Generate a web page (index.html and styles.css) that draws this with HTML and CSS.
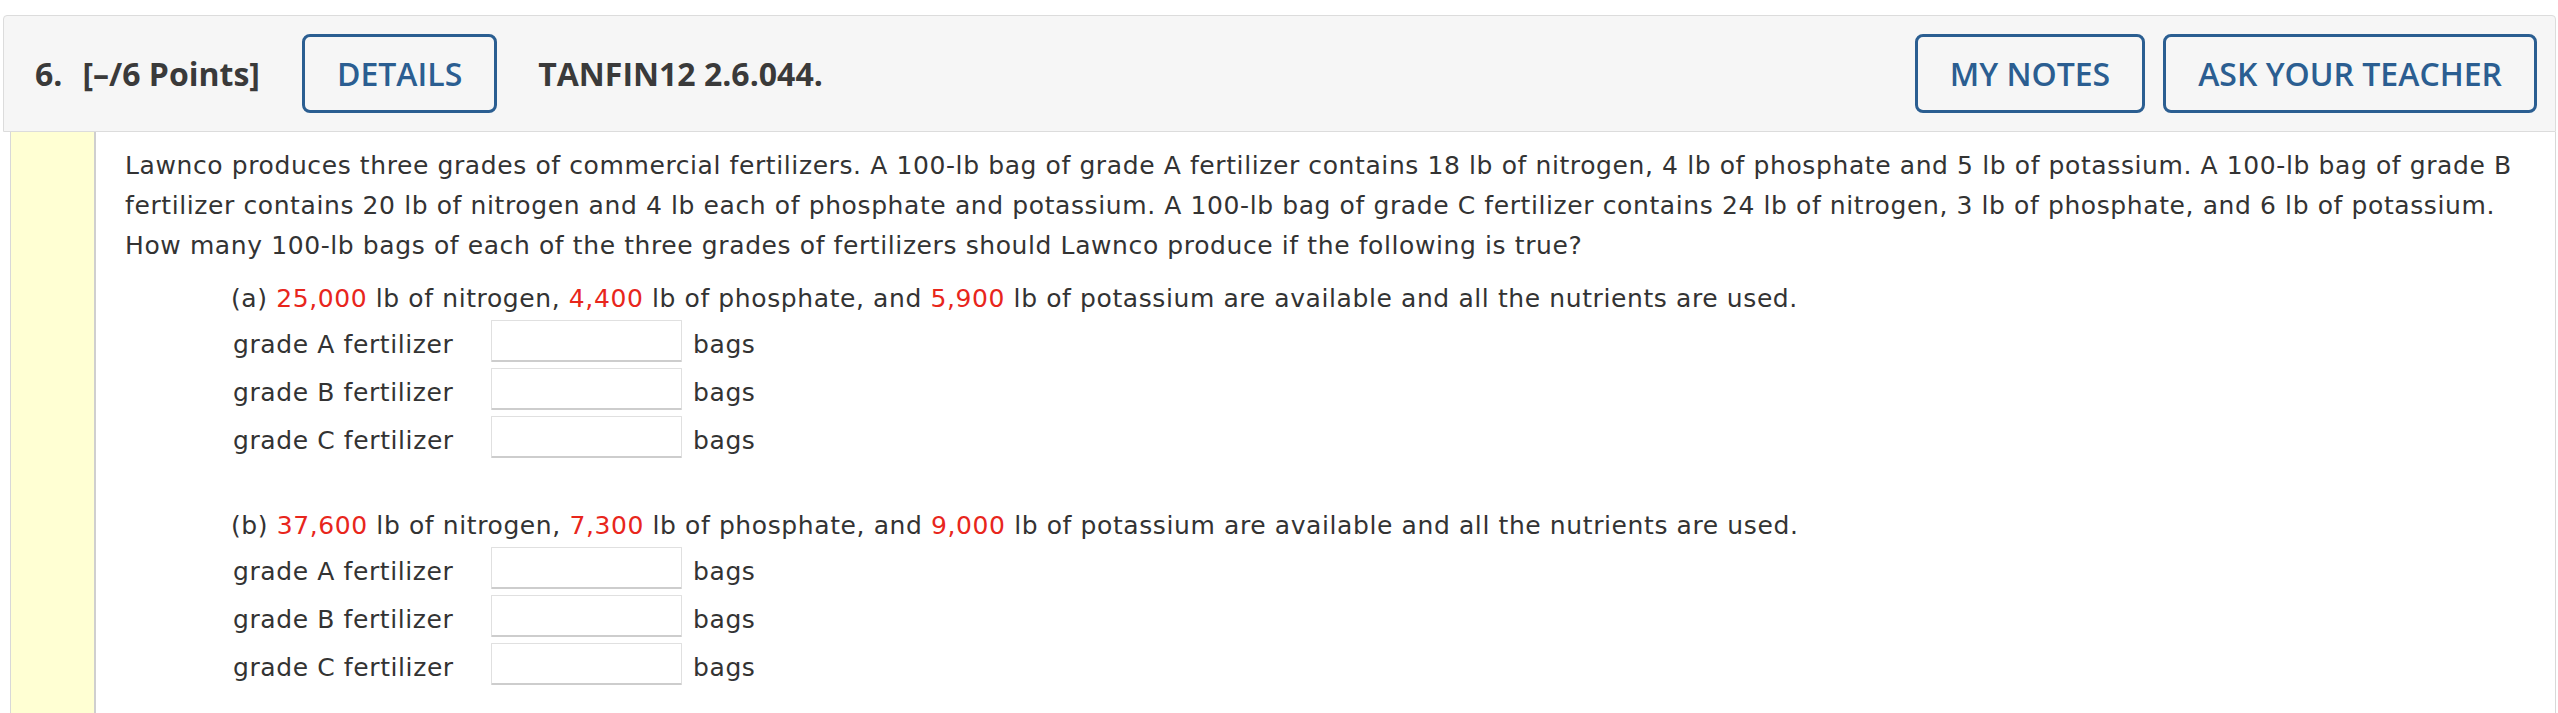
FILE: index.html
```html
<!DOCTYPE html>
<html lang="en">
<head>
<meta charset="utf-8">
<title>Question 6</title>
<link rel="stylesheet" href="styles.css">
</head>
<body>
<div class="question">
  <div class="header">
    <span class="qnum">6.</span>
    <span class="points">[–/6 Points]</span>
    <button class="btn btn-details">DETAILS</button>
    <span class="qid">TANFIN12 2.6.044.</span>
    <span class="spacer"></span>
    <button class="btn">MY NOTES</button>
    <button class="btn btn-ask">ASK YOUR TEACHER</button>
  </div>
  <div class="content">
    <div class="strip"></div>
    <div class="body">
      <p class="stem">Lawnco produces three grades of commercial fertilizers. A 100-lb bag of grade A fertilizer contains 18 lb of nitrogen, 4 lb of phosphate and 5 lb of potassium. A 100-lb bag of grade B fertilizer contains 20 lb of nitrogen and 4 lb each of phosphate and potassium. A 100-lb bag of grade C fertilizer contains 24 lb of nitrogen, 3 lb of phosphate, and 6 lb of potassium. How many 100-lb bags of each of the three grades of fertilizers should Lawnco produce if the following is true?</p>
      <div class="part">
        <p class="part-text">(a) <span class="red">25,000</span> lb of nitrogen, <span class="red">4,400</span> lb of phosphate, and <span class="red">5,900</span> lb of potassium are available and all the nutrients are used.</p>
        <div class="rows">
          <div class="row"><span class="label">grade A fertilizer</span><input class="answer" type="text"><span class="unit">bags</span></div>
          <div class="row"><span class="label">grade B fertilizer</span><input class="answer" type="text"><span class="unit">bags</span></div>
          <div class="row"><span class="label">grade C fertilizer</span><input class="answer" type="text"><span class="unit">bags</span></div>
        </div>
      </div>
      <div class="part part-b">
        <p class="part-text">(b) <span class="red">37,600</span> lb of nitrogen, <span class="red">7,300</span> lb of phosphate, and <span class="red">9,000</span> lb of potassium are available and all the nutrients are used.</p>
        <div class="rows">
          <div class="row"><span class="label">grade A fertilizer</span><input class="answer" type="text"><span class="unit">bags</span></div>
          <div class="row"><span class="label">grade B fertilizer</span><input class="answer" type="text"><span class="unit">bags</span></div>
          <div class="row"><span class="label">grade C fertilizer</span><input class="answer" type="text"><span class="unit">bags</span></div>
        </div>
      </div>
    </div>
  </div>
</div>
</body>
</html>
```

FILE: styles.css
```css
html, body {
  margin: 0;
  padding: 0;
  background: #ffffff;
}

.question {
  margin: 15px 2px 0 3px;
}

.header {
  box-sizing: border-box;
  height: 117px;
  display: flex;
  align-items: center;
  padding: 0 18px 0 31px;
  background: #f6f6f6;
  border: 1px solid #dcdcdc;
  border-radius: 4px 4px 0 0;
  font-family: "Open Sans", "Liberation Sans", sans-serif;
  color: #3a3a3a;
}

.qnum,
.points,
.qid {
  font-size: 32px;
  font-weight: 700;
  white-space: nowrap;
}

.points {
  margin-left: 20px;
}

.qid {
  margin-left: 41px;
}

.spacer {
  flex: 1;
}

.btn {
  box-sizing: border-box;
  height: 79px;
  padding: 0 32px;
  margin: 0;
  background: transparent;
  border: 3px solid #2b5e91;
  border-radius: 8px;
  color: #2b5e91;
  font-family: "Open Sans", "Liberation Sans", sans-serif;
  font-size: 32px;
  font-weight: 600;
  white-space: nowrap;
  cursor: pointer;
}

.btn-details {
  margin-left: 42px;
}

.btn-ask {
  margin-left: 18px;
}

.content {
  display: flex;
  margin-left: 7px;
  border-left: 1px solid #d8d8d8;
  border-right: 1px solid #d8d8d8;
  min-height: 600px;
}

.strip {
  width: 83px;
  flex: none;
  background: #ffffd3;
  border-right: 2px solid #cfcfcf;
}

.body {
  flex: 1;
  padding: 14px 20px 0 29px;
  font-family: "DejaVu Sans", Verdana, sans-serif;
  font-size: 25px;
  letter-spacing: 0.6px;
  line-height: 40px;
  color: #333333;
}

.stem {
  margin: 0;
}

.part {
  padding-left: 106px;
  margin-top: 13px;
}

.part-b {
  margin-top: 43px;
}

.part-text {
  margin: 0;
}

.red {
  color: #e8261c;
}

.rows {
  display: flex;
  flex-direction: column;
}

.row {
  display: flex;
  align-items: flex-start;
  height: 48px;
}

.label {
  width: 260px;
  flex: none;
  padding-top: 6px;
  padding-left: 2px;
  box-sizing: border-box;
}

.answer {
  box-sizing: border-box;
  width: 191px;
  height: 42px;
  margin: 1px 0 0 0;
  border: 1px solid #e0e0e0;
  border-bottom: 2px solid #cdcdcd;
  border-radius: 1px;
  background: #ffffff;
  font-family: "DejaVu Sans", sans-serif;
  font-size: 22px;
  padding: 0 6px;
}

.unit {
  margin-left: 11px;
  padding-top: 6px;
}
```
